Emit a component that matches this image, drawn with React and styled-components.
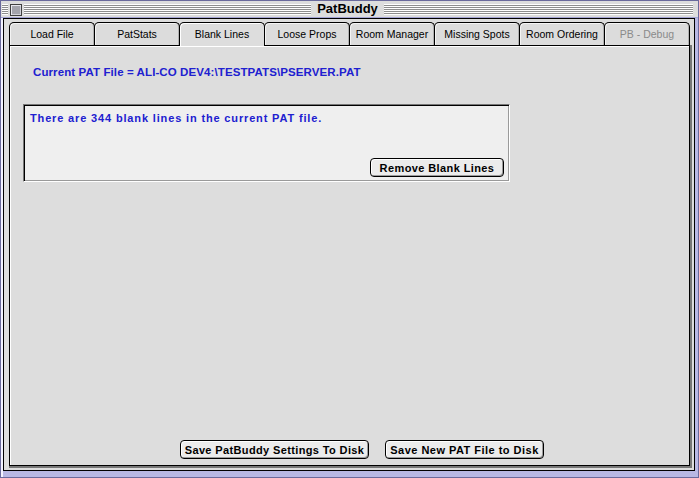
import React from "react";
import styled, { createGlobalStyle } from "styled-components";

const Global = createGlobalStyle`
  html, body { margin: 0; padding: 0; background: #ffffff; }
  * { box-sizing: border-box; }
  body { font-family: "Liberation Sans", Arial, sans-serif; }
`;

const Window = styled.div`
  width: 699px;
  height: 478px;
  border: 1px solid #6a6a9c;
  background: #b8b8e4;
  box-shadow: inset 1px 1px 0 #f2f2ff, inset 2px 0 0 #f2f2ff;
  padding: 0 3px 6px 2px;
  display: flex;
  flex-direction: column;
`;

const TitleBar = styled.div`
  height: 17px;
  margin: 0 -3px 0 -2px;
  padding: 0 5px 0 1px;
  background: #dddddd;
  border-bottom: 1px solid #a4a4d4;
  display: flex;
  align-items: center;
`;

const TitleSide = styled.div`
  flex: 1 1 0;
  display: flex;
  align-items: center;
`;

const Stripes = styled.div`
  flex: ${(p) => (p.$w ? `0 0 ${p.$w}px` : "1 1 auto")};
  height: 11px;
  margin-top: 1px;
  background: repeating-linear-gradient(
    to bottom,
    #ffffff 0px,
    #ffffff 1px,
    #8e8e8e 1px,
    #8e8e8e 2px
  );
`;

const CloseBox = styled.div`
  width: 12px;
  height: 12px;
  margin: 1px 2px 0 2px;
  border: 1px solid #404040;
  background: #a4a4ac;
  box-shadow: inset 1px 1px 0 #e8e8ee, inset -1px -1px 0 #d0d0d8;
`;

const Title = styled.div`
  padding: 0 6px;
  font-family: "Liberation Sans", Arial, sans-serif;
  font-weight: bold;
  font-size: 13px;
  line-height: 16px;
  color: #000;
`;

const Content = styled.div`
  flex: 1 1 auto;
  border: 1px solid #000;
  background: #dddddd;
  padding: 3px 2px 2px 5px;
  display: flex;
  flex-direction: column;
`;

const TabRow = styled.div`
  display: flex;
  align-self: flex-start;
  height: 23px;
  align-items: flex-start;
`;

const Tab = styled.div`
  position: relative;
  z-index: ${(p) => (p.$active ? 2 : 1)};
  width: 86px;
  height: ${(p) => (p.$active ? 24 : 23)}px;
  margin-left: ${(p) => (p.$first ? 0 : -1)}px;
  border: 1px solid #000;
  border-bottom: none;
  border-radius: 5px 5px 0 0;
  background: ${(p) => (p.$active ? "#dddddd" : "#dcdcdc")};
  box-shadow: ${(p) =>
    p.$active
      ? "inset 1px 1px 0 #ffffff"
      : "inset 1px 1px 0 #f4f4f4, inset -1px 0 0 #b0b0b0"};
  display: flex;
  align-items: center;
  justify-content: center;
  padding-bottom: ${(p) => (p.$active ? 1 : 0)}px;
  font-family: "Liberation Sans", Arial, sans-serif;
  font-size: 10.5px;
  color: ${(p) => (p.$disabled ? "#8a8a8a" : "#000")};
  white-space: nowrap;
`;

const PanelFrame = styled.div`
  flex: 1 1 auto;
  display: flex;
  border-right: 2px solid #777777;
  border-bottom: 2px solid #777777;
`;

const Panel = styled.div`
  flex: 1 1 auto;
  border: 1px solid #000;
  box-shadow: inset 1px 1px 0 #ffffff;
  background: #dddddd;
  padding: 19px 0 6px 13px;
  display: flex;
  flex-direction: column;
`;

const PathLine = styled.div`
  margin-left: 10px;
  font-family: "Liberation Sans", Arial, sans-serif;
  font-weight: bold;
  font-size: 11.5px;
  line-height: 14px;
  letter-spacing: 0.1px;
  color: #2020d0;
  white-space: nowrap;
`;

const InfoBox = styled.div`
  margin-top: 25px;
  width: 487px;
  height: 78px;
  border: 1px solid;
  border-color: #777777 #ffffff #ffffff #777777;
  box-shadow: inset 1px 1px 0 #000000, inset -1px -1px 0 #9a9a9a;
  background: #efefef;
  padding: 6px 5px 4px 6px;
  display: flex;
  flex-direction: column;
`;

const InfoText = styled.div`
  font-family: "Liberation Sans", Arial, sans-serif;
  font-weight: bold;
  font-size: 11px;
  line-height: 14px;
  letter-spacing: 0.85px;
  color: #2020d0;
  white-space: nowrap;
`;

const Button = styled.button`
  width: ${(p) => p.$w}px;
  height: 19px;
  padding: 0;
  margin: 0;
  border: 1px solid #000;
  border-radius: 4px;
  background: #ececec;
  box-shadow: inset 1px 1px 0 #ffffff, inset -1px -1px 0 #9c9c9c;
  font-family: "Liberation Sans", Arial, sans-serif;
  font-weight: bold;
  font-size: 11px;
  letter-spacing: ${(p) => p.$ls || 0.4}px;
  color: #000;
  white-space: nowrap;
  display: flex;
  align-items: center;
  justify-content: center;
  cursor: default;
`;

const BoxButton = styled(Button)`
  margin-top: auto;
  align-self: flex-end;
`;

const BottomRow = styled.div`
  margin-top: auto;
  padding-left: 157px;
  display: flex;
  gap: 16px;
`;

const tabs = [
  "Load File",
  "PatStats",
  "Blank Lines",
  "Loose Props",
  "Room Manager",
  "Missing Spots",
  "Room Ordering",
  "PB - Debug",
];

export default function App() {
  return (
    <>
      <Global />
      <Window>
        <TitleBar>
          <TitleSide>
            <Stripes $w={6} />
            <CloseBox />
            <Stripes />
          </TitleSide>
          <Title>PatBuddy</Title>
          <TitleSide>
            <Stripes />
          </TitleSide>
        </TitleBar>
        <Content>
          <TabRow>
            {tabs.map((t, i) => (
              <Tab
                key={t}
                $first={i === 0}
                $active={t === "Blank Lines"}
                $disabled={t === "PB - Debug"}
              >
                {t}
              </Tab>
            ))}
          </TabRow>
          <PanelFrame>
            <Panel>
              <PathLine>Current PAT File = ALI-CO DEV4:\TESTPATS\PSERVER.PAT</PathLine>
              <InfoBox>
                <InfoText>There are 344 blank lines in the current PAT file.</InfoText>
                <BoxButton $w={134}>Remove Blank Lines</BoxButton>
              </InfoBox>
              <BottomRow>
                <Button $w={189} $ls={0.37}>Save PatBuddy Settings To Disk</Button>
                <Button $w={159} $ls={0.48}>Save New PAT File to Disk</Button>
              </BottomRow>
            </Panel>
          </PanelFrame>
        </Content>
      </Window>
    </>
  );
}
